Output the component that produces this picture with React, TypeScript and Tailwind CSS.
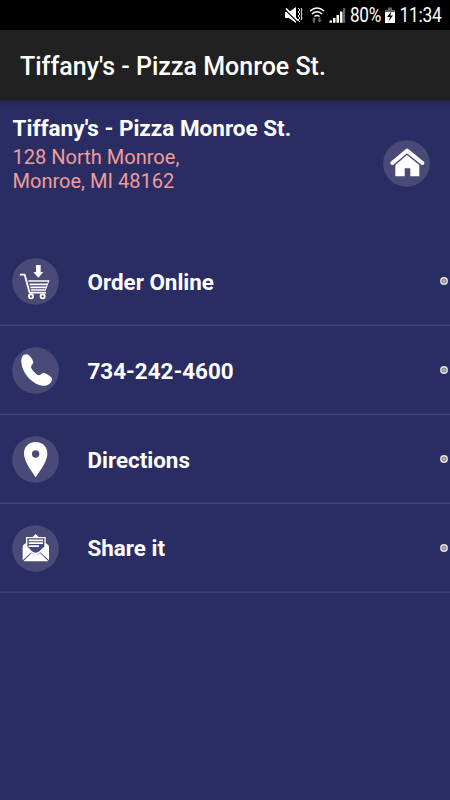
import type { ReactNode } from "react";

function IconDisc({ children }: { children: ReactNode }) {
  return (
    <svg className="block h-[47px] w-[47px] shrink-0" viewBox="0 0 141 141" fill="#fff">
      <circle cx="70.5" cy="70.5" r="70" fill="#494a78" />
      {children}
    </svg>
  );
}

function HomeIcon() {
  return (
    <IconDisc>
      <path d="M28 69 L72 32 L118 69" fill="none" stroke="#fff" strokeWidth="12" strokeLinecap="round" strokeLinejoin="round" />
      <path d="M37 75 L72 45 L109 75 V109 H82 V85 H65 V109 H37 Z" />
    </IconDisc>
  );
}

function CartIcon() {
  return (
    <IconDisc>
      <path d="M72 21 H86 V42 H94 L79 59 L64 42 H72 Z" />
      <path d="M26 50 H38 L53 104 H100" fill="none" stroke="#fff" strokeWidth="5.5" strokeLinejoin="round" strokeLinecap="round" />
      <path d="M49 69 H111 M53 79 H105 M55 88 H103 M57 96 H101" fill="none" stroke="#fff" strokeWidth="5.2" />
      <path d="M111 67 L100 96" stroke="#fff" strokeWidth="3" />
      <circle cx="57" cy="115" r="6.3" fill="#494a78" stroke="#fff" strokeWidth="5.5" />
      <circle cx="92" cy="115" r="6.3" fill="#494a78" stroke="#fff" strokeWidth="5.5" />
    </IconDisc>
  );
}

function PhoneIcon() {
  return (
    <IconDisc>
      <path d="M44 22 C33 21 27 32 28 45 C31 81 61 111 91 116 C107 118 121 107 120 95 C119 89 103 79 96 78 C89 77 86 85 80 85 C74 84 58 68 57 60 C57 55 64 52 64 46 C63 39 53 23 44 22 Z" />
    </IconDisc>
  );
}

function PinIcon() {
  return (
    <IconDisc>
      <path fillRule="evenodd" d="M71 18 C49 18 35 34 36 54 C37 76 56 102 71 124 C86 102 105 76 106 54 C107 34 93 18 71 18 Z M71 43 A11 11 0 1 1 71 65 A11 11 0 1 1 71 43 Z" />
    </IconDisc>
  );
}

function MailIcon() {
  return (
    <IconDisc>
      <path d="M33 67 V61 L42 54 V36 H62 L71 27 L80 36 H101 V54 L110 61 V67 L71 91 Z" />
      <path d="M46 40 H97 V64 L84 77 Q71 89 58 77 L46 64 Z" fill="#45477a" />
      <path d="M50 46 H93 M50 54.5 H93 M50 63.5 H81" stroke="#fff" strokeWidth="5.4" />
      <path d="M32 63 L58 82 L32 106 Z M111 63 L85 82 L111 106 Z" />
      <path d="M34 109 L59 84 Q71 94 84 84 L109 109 Z" />
    </IconDisc>
  );
}

function StatusBar() {
  return (
    <header className="flex h-[30px] shrink-0 items-center bg-black pl-[284px] text-white">
      <svg className="block h-[30px] w-[62px] shrink-0" viewBox="0 0 62 30" fill="#fff">
        <path d="M1 12 H5 L12 7 V23 L5 18 H1 Z" />
        <path d="M1 9.5 L13 21.5" stroke="#000" strokeWidth="1.2" />
        <path d="M2 8.5 L14 20.5" stroke="#fff" strokeWidth="1.7" />
        <path d="M14 8 L16 10 L14 12 L16 14 L14 16 L16 18 L14 20 L16 22 M17 8 L18 10 L17 12 L18 14 L17 16 L18 18 L17 20" fill="none" stroke="#fff" strokeWidth="1" />
        <path d="M26 11 Q33 5 40 11 M28 14 Q33 9.5 38 14 M30.5 16.5 Q33 14.5 35.5 16.5" fill="none" stroke="#fff" strokeWidth="1.5" />
        <path d="M29 22.5 V19.5 H27.8 L30 17 L32.2 19.5 H31 V22.5 Z M34.5 17.5 H36.5 V20 H37.7 L35.5 22.5 L33.3 20 H34.5 Z" fill="#686868" />
        <path d="M45.5 20.5 H48 V22.8 H45.5 Z M49 18 H51.5 V22.8 H49 Z M52.5 15 H55 V22.8 H52.5 Z M56 11.5 H58.5 V22.8 H56 Z" />
        <path d="M59 8 H61.2 V22.8 H59 Z" fill="#666" />
      </svg>
      <span className="w-[38px] origin-left scale-x-[0.88] whitespace-nowrap pl-[4.5px] pt-[2px] text-[19.5px] leading-[30px] tracking-[-0.3px]">80%</span>
      <svg className="block h-[30px] w-[12px] shrink-0" viewBox="0 0 12 30">
        <path d="M4 7.5 H8 V10 H11 V13 H1 V10 H4 Z" fill="#666" />
        <path d="M1 12 H11 V23 H1 Z" fill="#fff" />
        <path d="M7.5 11 L3 17 H6 L4.5 21.5 L9 15.5 H6.2 Z" fill="#000" />
      </svg>
      <span className="origin-left scale-x-[0.89] whitespace-nowrap pl-[4px] pt-[2px] text-[19.5px] leading-[30px] tracking-[-0.3px]">11:34</span>
    </header>
  );
}

const actions = [
  { label: "Order Online", icon: <CartIcon /> },
  { label: "734-242-4600", icon: <PhoneIcon /> },
  { label: "Directions", icon: <PinIcon /> },
  { label: "Share it", icon: <MailIcon /> },
];

export default function App() {
  return (
    <div className="flex h-[800px] w-[450px] flex-col overflow-hidden bg-[#292d64] font-[Roboto,sans-serif] text-white">
      <StatusBar />
      <div className="flex h-[70px] shrink-0 items-center bg-[#212121] pl-5 pt-[3px] text-[25px] font-medium">
        <h1 className="whitespace-nowrap font-medium">Tiffany's - Pizza Monroe St.</h1>
      </div>
      <div className="h-[6px] shrink-0 bg-linear-to-b from-[#22254f] to-[#292d64]" />
      <section className="flex h-[131.5px] shrink-0 justify-between pl-[12.5px] pr-5">
        <div className="pt-[9px]">
          <h2 className="whitespace-nowrap text-[22.5px] font-bold leading-[26px]">Tiffany's - Pizza Monroe St.</h2>
          <p className="pt-[4px] text-[20.05px] leading-[24px] text-[#f29b98]">
            128 North Monroe,<br />Monroe, MI 48162
          </p>
        </div>
        <div className="pt-[33.5px]"><HomeIcon /></div>
      </section>
      <nav className="flex flex-col">
        {actions.map(({ label, icon }) => (
          <a key={label} className="flex h-[88.75px] items-center pl-3 pr-px shadow-[inset_0_-1.5px_0_#3f4377]">
            {icon}
            <span className="ml-[28.5px] flex-1 pt-[2px] text-[22.4px] font-bold">{label}</span>
            <svg className="block h-[9px] w-[10px]" viewBox="0 0 10 9">
              <circle cx="5" cy="4" r="3.9" fill="#e7e5e0" />
              <circle cx="5" cy="4" r="2" fill="#bbb" stroke="#6e6e76" strokeWidth="1" />
            </svg>
          </a>
        ))}
      </nav>
    </div>
  );
}
